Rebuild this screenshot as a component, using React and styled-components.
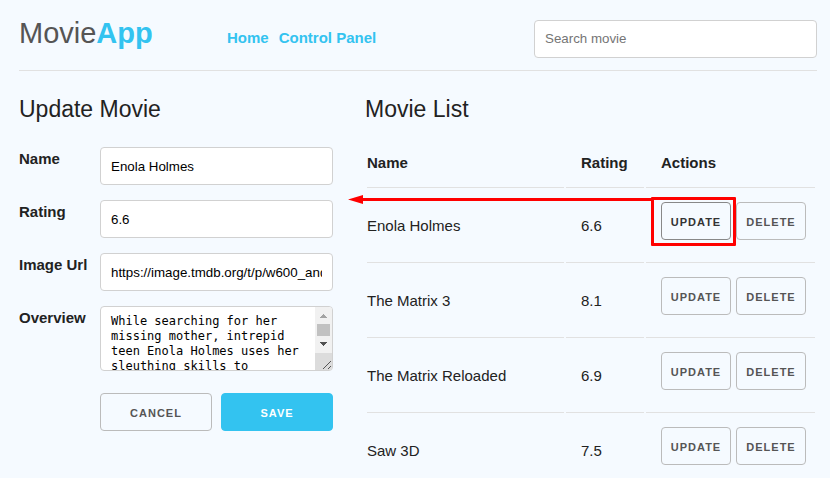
import React from "react";
import styled, { createGlobalStyle } from "styled-components";

const GlobalStyle = createGlobalStyle`
  * { box-sizing: border-box; }
  body {
    margin: 0;
    background: #f5faff;
    color: #222;
    font: 15px/24px Arial, "Liberation Sans", sans-serif;
  }
`;

const Page = styled.div`
  padding: 15px 13px 0 19px;
`;

const Header = styled.header`
  display: grid;
  grid-template-columns: 176fr 275fr 283fr;
  column-gap: 32px;
  align-items: baseline;
  padding-bottom: 12px;
  border-bottom: 1px solid #e1e1e1;
`;

const Logo = styled.h1`
  margin: 0;
  color: #555;
  font-size: 29px;
  font-weight: 400;
  line-height: 36px;
  height: 38px;
  strong { color: #33c3f0; }
`;

const Nav = styled.nav`
  display: flex;
  gap: 10px;
`;

const NavLink = styled.a`
  color: #33c3f0;
  font-weight: 700;
  text-decoration: none;
`;

const TextInput = styled.input`
  width: 100%;
  height: 38px;
  padding: 6px 10px;
  border: 1px solid #d1d1d1;
  border-radius: 4px;
  background: #fff;
  color: #000;
  font-family: Arial, "Liberation Sans", sans-serif;
  &::placeholder { color: #757575; }
`;

const FieldInput = styled(TextInput)`
  padding: 7px 10px 5px;
`;

const Main = styled.main`
  display: grid;
  grid-template-columns: 314fr 452fr;
  column-gap: 32px;
  align-items: start;
  padding-top: 20px;
`;

const Title = styled.h2`
  margin: 0 0 ${(p) => p.$gap}px;
  font-size: 23px;
  font-weight: 400;
  line-height: 36px;
`;

const Form = styled.form`
  display: grid;
  gap: 15px;
`;

const Field = styled.div`
  display: grid;
  grid-template-columns: 81px minmax(0, 1fr);
  align-items: start;
`;

const Label = styled.label`
  font-weight: 700;
`;

const AreaFrame = styled.div`
  position: relative;
  height: 65px;
  border: 1px solid #d1d1d1;
  border-radius: 4px;
  background: #fff;
  overflow: hidden;
`;

const TextArea = styled.textarea`
  display: block;
  width: 100%;
  height: 100%;
  padding: 7px 26px 0 10px;
  border: 0;
  outline: 0;
  resize: none;
  overflow: hidden;
  background: transparent;
  color: #000;
  font: 12px/15px "DejaVu Sans Mono", "Liberation Mono", monospace;
`;

const ScrollBar = styled.svg`
  position: absolute;
  top: 0;
  right: 0;
`;

const FormActions = styled.div`
  display: grid;
  grid-template-columns: 1fr 1fr;
  gap: 9px;
  margin: 7px 0 0 81px;
`;

const tones = {
  plain: ["transparent", "#bbb", "#555"],
  focused: ["transparent", "#888", "#333"],
  primary: ["#33c3f0", "#33c3f0", "#fff"],
};

const Button = styled.button`
  height: 38px;
  min-width: 70px;
  padding: 2px 0 0;
  border: 1px solid ${(p) => tones[p.$tone || "plain"][1]};
  border-radius: 4px;
  background: ${(p) => tones[p.$tone || "plain"][0]};
  color: ${(p) => tones[p.$tone || "plain"][2]};
  font: 600 11px/14px Arial, "Liberation Sans", sans-serif;
  letter-spacing: 1px;
  text-transform: uppercase;
  cursor: pointer;
`;

const Table = styled.table`
  width: 100%;
  margin: 0;
  border-spacing: 2px;
  table-layout: fixed;
`;

const Col = styled.col`
  width: ${(p) => p.$width};
`;

const HeadCell = styled.th`
  padding: 12px 15px;
  border-bottom: 1px solid #e1e1e1;
  text-align: left;
  &:first-child { padding-left: 0; }
`;

const Cell = styled.td`
  padding: 12px 15px;
  border-bottom: 1px solid #e1e1e1;
  &:first-child { padding-left: 0; }
  &:last-child { padding-right: 0; }
`;

const RowActions = styled.div`
  display: flex;
  gap: 5px;
  margin-bottom: 10px;
`;

const Marked = styled.div`
  position: relative;
  display: flex;
`;

const MarkBox = styled.span`
  position: absolute;
  inset: -5px -5px -6px -10px;
  border: 3px solid #f00;
  border-radius: 1px;
  pointer-events: none;
`;

const Arrow = styled.svg`
  position: absolute;
  top: -7px;
  right: 79px;
  pointer-events: none;
`;

const movies = [
  { name: "Enola Holmes", rating: "6.6", marked: true },
  { name: "The Matrix 3", rating: "8.1" },
  { name: "The Matrix Reloaded", rating: "6.9" },
  { name: "Saw 3D", rating: "7.5" },
];

const fields = [
  { id: "name", label: "Name", value: "Enola Holmes" },
  { id: "rating", label: "Rating", value: "6.6" },
  { id: "image", label: "Image Url", value: "https://image.tmdb.org/t/p/w600_and_h900_bestv2" },
];

const overview =
  "While searching for her missing mother, intrepid teen Enola Holmes uses her sleuthing skills to";

function UpdateForm() {
  return (
    <section>
      <Title $gap={20}>Update Movie</Title>
      <Form onSubmit={(e) => e.preventDefault()}>
        {fields.map((f) => (
          <Field key={f.id}>
            <Label htmlFor={f.id}>{f.label}</Label>
            <FieldInput id={f.id} type="text" defaultValue={f.value} />
          </Field>
        ))}
        <Field>
          <Label htmlFor="overview">Overview</Label>
          <AreaFrame>
            <TextArea id="overview" defaultValue={overview} />
            <ScrollBar width="17" height="63" aria-hidden="true" shapeRendering="crispEdges">
              <rect width="17" height="46" fill="#f1f1f1" />
              <rect y="46" width="17" height="17" fill="#dcdcdc" />
              <path d="M5 11h7l-3-4h-1z" fill="#a3a3a3" />
              <rect x="2" y="17" width="13" height="12" fill="#c1c1c1" />
              <path d="M5 35h7l-3 4h-1z" fill="#505050" />
              <path d="M8 62l8-8M13 62l3-3" stroke="#555" shapeRendering="auto" />
            </ScrollBar>
          </AreaFrame>
        </Field>
        <FormActions>
          <Button type="button">Cancel</Button>
          <Button type="submit" $tone="primary">Save</Button>
        </FormActions>
      </Form>
    </section>
  );
}

function MovieList() {
  return (
    <section>
      <Title $gap={10}>Movie List</Title>
      <Table>
        <colgroup>
          <Col />
          <Col $width="78px" />
          <Col $width="169px" />
        </colgroup>
        <thead>
          <tr>
            <HeadCell>Name</HeadCell>
            <HeadCell>Rating</HeadCell>
            <HeadCell>Actions</HeadCell>
          </tr>
        </thead>
        <tbody>
          {movies.map((m) => (
            <tr key={m.name}>
              <Cell>{m.name}</Cell>
              <Cell>{m.rating}</Cell>
              <Cell>
                <RowActions>
                  <Marked>
                    <Button type="button" $tone={m.marked ? "focused" : "plain"}>Update</Button>
                    {m.marked && (
                      <>
                        <MarkBox />
                        <Arrow width="304" height="9" aria-hidden="true">
                          <path d="M0 4.5L15 0v3h289v3H15v3z" fill="#f00" />
                        </Arrow>
                      </>
                    )}
                  </Marked>
                  <Button type="button">Delete</Button>
                </RowActions>
              </Cell>
            </tr>
          ))}
        </tbody>
      </Table>
    </section>
  );
}

export default function App() {
  return (
    <>
      <GlobalStyle />
      <Page>
        <Header>
          <Logo>Movie<strong>App</strong></Logo>
          <Nav>
            <NavLink href="#home">Home</NavLink>
            <NavLink href="#panel">Control Panel</NavLink>
          </Nav>
          <TextInput type="search" placeholder="Search movie" aria-label="Search movie" />
        </Header>
        <Main>
          <UpdateForm />
          <MovieList />
        </Main>
      </Page>
    </>
  );
}
